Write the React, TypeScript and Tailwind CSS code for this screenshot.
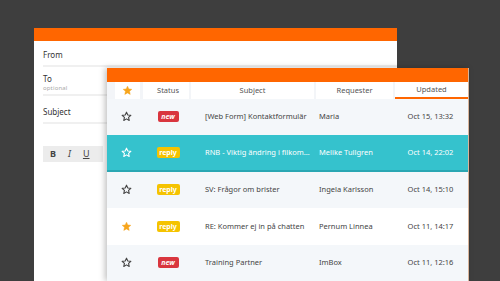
import React from "react";

type Row = {
  starred: boolean;
  status: "new" | "reply";
  subject: string;
  requester: string;
  updated: string;
  active?: boolean;
  shade: boolean;
};

const rows: Row[] = [
  { starred: false, status: "new", subject: "[Web Form] Kontaktformulär", requester: "Maria", updated: "Oct 15, 13:32", shade: true },
  { starred: false, status: "reply", subject: "RNB - Viktig ändring i filkomm...", requester: "Melike Tullgren", updated: "Oct 14, 22:02", active: true, shade: false },
  { starred: false, status: "reply", subject: "SV: Frågor om brister", requester: "Ingela Karlsson", updated: "Oct 14, 15:10", shade: true },
  { starred: true, status: "reply", subject: "RE: Kommer ej in på chatten", requester: "Pernum Linnea", updated: "Oct 11, 14:17", shade: false },
  { starred: false, status: "new", subject: "Training Partner", requester: "ImBox", updated: "Oct 11, 12:16", shade: true },
];

const Star = ({ filled, color }: { filled: boolean; color: string }) => (
  <svg width="11" height="11" viewBox="0 0 24 24">
    <path
      d="M12 2.5l2.9 6.2 6.6.7-5 4.5 1.4 6.6L12 17.2l-5.9 3.3 1.4-6.6-5-4.5 6.6-.7z"
      fill={filled ? color : "none"}
      stroke={color}
      strokeWidth={filled ? 1 : 2.4}
      strokeLinejoin="round"
    />
  </svg>
);

const Badge = ({ kind }: { kind: "new" | "reply" }) =>
  kind === "new" ? (
    <span className="inline-flex h-[11px] w-[21px] items-center justify-center rounded-[2px] bg-[#d9363e] text-[7px] font-bold italic leading-none text-white">
      new
    </span>
  ) : (
    <span className="inline-flex h-[11px] w-[23px] items-center justify-center rounded-[2px] bg-[#f5c300] text-[7px] font-bold leading-none text-white">
      reply
    </span>
  );

export default function App() {
  return (
    <div
      className="relative h-[281px] w-[500px] overflow-hidden bg-[#3e3e3e]"
      style={{ fontFamily: "'Noto Sans', 'Open Sans', sans-serif" }}
    >
      {/* compose window (back) */}
      <div className="absolute left-[34px] top-[28px] flex h-[253px] w-[363px] flex-col bg-white">
        <div className="h-[13px] bg-[#ff6600]" />
        <div className="flex flex-col pl-[9px] text-[8px] text-[#333]">
          <div className="flex h-[26px] items-center border-b-2 border-[#f0f0f0] pt-[4px]">From</div>
          <div className="flex h-[29px] flex-col justify-center border-b-2 border-[#f0f0f0] pt-[5px]">
            <span className="leading-[10px]">To</span>
            <span className="text-[6px] leading-[8px] tracking-wide text-[#aaa]">optional</span>
          </div>
          <div className="flex h-[28px] items-center border-b-2 border-[#f0f0f0] pt-[6px]">Subject</div>
          <div className="mt-[22px] flex h-[16px] w-[60px] items-center gap-[12px] bg-[#ececec] pl-[7px] text-[9px] text-[#444]">
            <span className="font-bold">B</span>
            <span className="italic">I</span>
            <span className="underline">U</span>
          </div>
        </div>
      </div>

      {/* ticket list window (front) */}
      <div className="absolute left-[107px] top-[68px] flex h-[213px] w-[362px] flex-col border-r border-[#d8b49a] bg-[#f4f7fa] shadow-[-2px_0_6px_rgba(0,0,0,0.25)]">
        <div className="h-[14px] bg-[#ff6600]" />
        <div className="grid h-[17px] grid-cols-[36px_48px_125px_79px_73px] bg-white text-[7.5px] text-[#555]">
          <div className="flex items-center justify-center border-l-[8px] border-r-[3px] border-[#f3f5f8] bg-white">
            <Star filled color="#f7a51c" />
          </div>
          <div className="flex items-center justify-center border-r-2 border-[#f3f5f8] pl-[4px]">Status</div>
          <div className="flex items-center justify-center border-r-2 border-[#f3f5f8]">Subject</div>
          <div className="flex items-center justify-center border-r-2 border-[#f3f5f8]">Requester</div>
          <div className="flex items-center justify-center border-b-2 border-[#ff6600]">Updated</div>
        </div>
        {rows.map((r, i) => (
          <div
            key={i}
            className={
              "grid h-[37px] grid-cols-[36px_48px_125px_79px_73px] items-center text-[7.5px] " +
              (r.active
                ? "border-b-2 border-[#2aa7b3] bg-[#35c2cd] text-white"
                : r.shade
                ? "bg-[#f4f7fa] text-[#444]"
                : "bg-white text-[#444]")
            }
          >
            <div className="flex justify-center pl-[2px]">
              <Star filled={r.starred} color={r.starred ? "#f7a51c" : r.active ? "#ffffff" : "#444444"} />
            </div>
            <div className="flex justify-center pl-[2px]">
              <Badge kind={r.status} />
            </div>
            <div className="truncate pl-[14px] pr-[4px]">{r.subject}</div>
            <div className="truncate pl-[3px]">{r.requester}</div>
            <div className="pr-[2px] text-center">{r.updated}</div>
          </div>
        ))}
      </div>
    </div>
  );
}
